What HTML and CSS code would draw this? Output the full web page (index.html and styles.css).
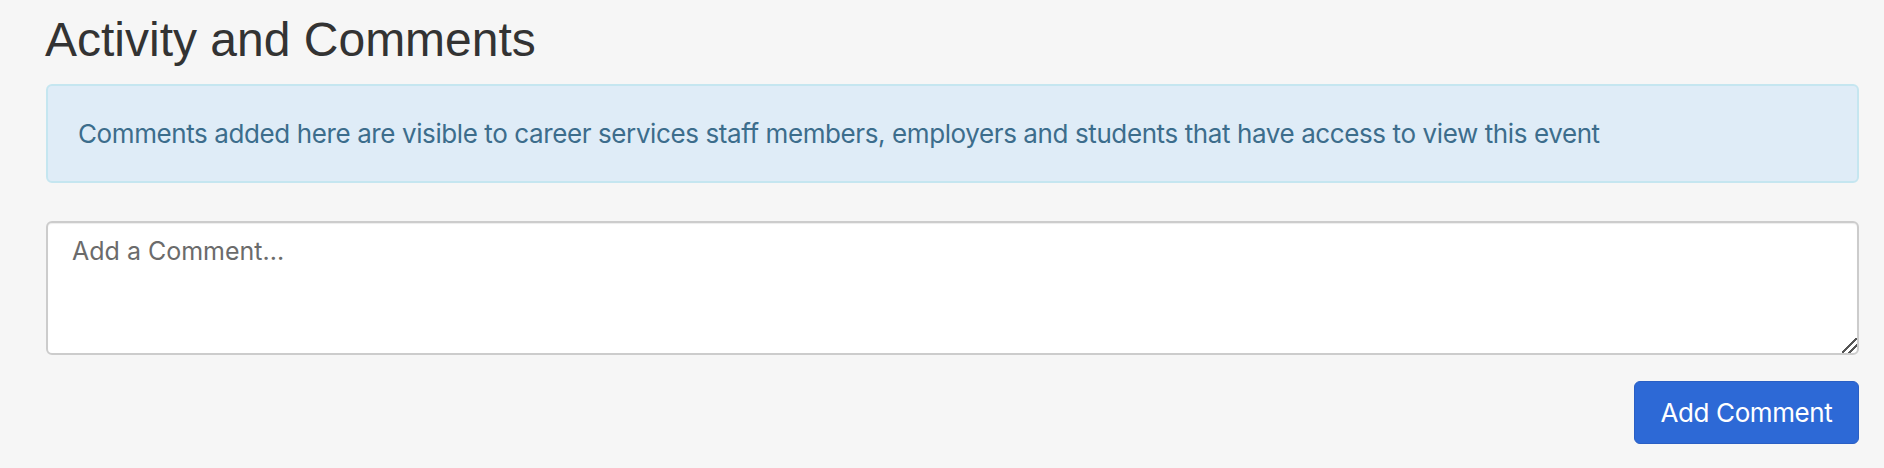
FILE: index.html
```html
<!DOCTYPE html>
<html lang="en">
<head>
<meta charset="utf-8">
<title>Activity and Comments</title>
<link rel="stylesheet" href="styles.css">
</head>
<body>
<section class="activity">
  <h2 class="activity-title">Activity and Comments</h2>
  <div class="alert-info">Comments added here are visible to career services staff members, employers and students that have access to view this event</div>
  <textarea class="comment-box" placeholder="Add a Comment..."></textarea>
  <div class="actions">
    <button class="btn-primary" type="button">Add Comment</button>
  </div>
</section>
</body>
</html>
```

FILE: styles.css
```css
html, body {
  margin: 0;
  padding: 0;
  background: #f6f6f6;
}
body {
  font-family: Inter, "Noto Sans", "Liberation Sans", sans-serif;
  color: #333;
}
.activity {
  display: flex;
  flex-direction: column;
  padding: 0 25px 0 46px;
}
.activity-title {
  margin: 0 0 0 -1px;
  height: 84px;
  padding-top: 8px;
  box-sizing: border-box;
  font-family: "Liberation Sans", Arial, sans-serif;
  font-size: 48px;
  font-weight: 400;
  line-height: 64px;
  color: #333;
}
.alert-info {
  box-sizing: border-box;
  height: 99px;
  display: flex;
  align-items: center;
  padding: 0 30px;
  background: #dfecf7;
  border: 2px solid #c5e6f0;
  border-radius: 6px;
  color: #3c6d8c;
  font-size: 26px;
  letter-spacing: -0.4px;
}
.comment-box {
  margin-top: 38px;
  box-sizing: border-box;
  height: 134px;
  width: 100%;
  padding: 13px 24px;
  background: #fff;
  border: 2px solid #ccc;
  border-radius: 6px;
  font-family: Inter, "Noto Sans", "Liberation Sans", sans-serif;
  font-size: 25px;
  color: #333;
  resize: vertical;
  box-shadow: inset 0 1px 1px rgba(0,0,0,0.075);
}
.comment-box::placeholder {
  color: #6b6b6b;
}
.comment-box::-webkit-resizer {
  background: linear-gradient(135deg,
    transparent 0%, transparent 46%,
    #555 46%, #555 54%,
    transparent 54%, transparent 70%,
    #555 70%, #555 78%,
    transparent 78%);
}
.actions {
  display: flex;
  justify-content: flex-end;
  margin-top: 26px;
}
.btn-primary {
  box-sizing: border-box;
  width: 225px;
  height: 63px;
  background: #2d69d6;
  border: 1px solid #2a5fc4;
  border-radius: 6px;
  color: #fff;
  font-family: Inter, "Noto Sans", "Liberation Sans", sans-serif;
  font-size: 26px;
  letter-spacing: -0.4px;
  cursor: pointer;
}
```
